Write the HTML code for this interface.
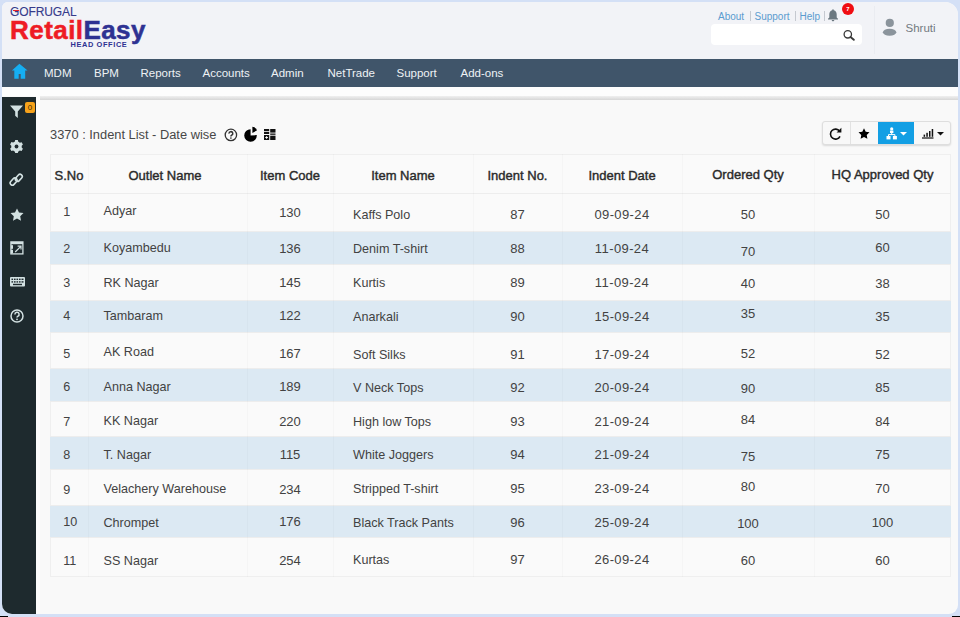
<!DOCTYPE html><html><head><meta charset="utf-8"><style>
*{margin:0;padding:0;box-sizing:border-box}
html,body{width:960px;height:617px;overflow:hidden;background:#d4e0f6;font-family:"Liberation Sans",sans-serif}
.frame{position:absolute;left:2px;top:2px;width:956px;height:612px;border-radius:6px 13px 9px 10px;overflow:hidden;background:#f9f9f9}
.a{position:absolute;white-space:nowrap}
.nv{font-size:11.5px;color:#eef2f5;line-height:14px}
.c{font-size:13px;color:#424242;line-height:16px}
.th{color:#2a2a2a;-webkit-text-stroke:0.4px #2a2a2a}
.tx{font-size:12.6px}
</style></head><body><div class="frame">
<div class="a" style="left:-2px;top:-2px;width:960px;height:59px;background:#f2f3f7"></div>
<div class="a" style="left:-2px;top:57px;width:960px;height:28px;background:#40556a"></div>
<div class="a" style="left:-2px;top:85px;width:960px;height:9px;background:#fdfdfd"></div>
<div class="a" style="left:34px;top:94px;width:4px;height:521px;background:#fdfdfd"></div>
<div class="a" style="left:38px;top:94px;width:920px;height:3.5px;background:linear-gradient(#f0f0f0,#d7d7d7)"></div>
<div class="a" style="left:0px;top:94.5px;width:34px;height:521px;background:#1e2a2e"></div>
<div class="a " style="left:8px;top:2.5999999999999996px;font-size:12px;color:#353a8a;line-height:14px;letter-spacing:-0.1px;-webkit-text-stroke:0.1px #353a8a">GOFRUGAL</div>
<div class="a" style="left:11.2px;top:7.9px;width:6.2px;height:1.4px;background:#e8202a"></div>
<div class="a " style="left:8px;top:12.5px;font-size:26px;font-weight:bold;line-height:30px;-webkit-text-stroke:0.5px currentColor"><span style="color:#ee1c25;letter-spacing:0.45px;-webkit-text-stroke:0.5px #ee1c25">Retail</span><span style="color:#2e3192;letter-spacing:0.4px;-webkit-text-stroke:0.5px #2e3192">Easy</span></div>
<div class="a " style="left:68.5px;top:38.5px;font-size:7.4px;font-weight:bold;color:#2e3192;line-height:8px;letter-spacing:0.62px">HEAD OFFICE</div>
<div class="a " style="left:716px;top:9px;font-size:10px;color:#5b9bcf;line-height:12px">About</div>
<div class="a " style="left:752.5px;top:9px;font-size:10px;color:#5b9bcf;line-height:12px">Support</div>
<div class="a " style="left:797.5px;top:9px;font-size:10px;color:#5b9bcf;line-height:12px">Help</div>
<div class="a" style="left:747.5px;top:8.5px;width:1px;height:10px;background:#c5c9d0"></div>
<div class="a" style="left:792.5px;top:8.5px;width:1px;height:10px;background:#c5c9d0"></div>
<div class="a" style="left:821.5px;top:8.5px;width:1px;height:10px;background:#c5c9d0"></div>
<svg class="a" style="left:825px;top:6px" width="12" height="14" viewBox="0 0 12 14"><path d="M6 1.2c-.5 0-.8.4-.8.8v.3C3.3 2.8 2.3 4.5 2.3 6.4v3L1 10.8v.6h10v-.6L9.7 9.4v-3c0-1.9-1-3.6-2.9-4.1V2c0-.4-.3-.8-.8-.8zM4.7 11.9c0 .8.6 1.4 1.3 1.4s1.3-.6 1.3-1.4z" fill="#6b7880"/></svg>
<div class="a" style="left:840px;top:1px;width:12px;height:12px;border-radius:6px;background:#f00d12;color:#fff;font-size:6px;font-weight:bold;line-height:12px;text-align:center">7</div>
<div class="a" style="left:709px;top:22px;width:151px;height:21px;background:#fff;border-radius:4px"></div>
<svg class="a" style="left:840px;top:27px" width="14" height="12" viewBox="0 0 14 12"><circle cx="5.8" cy="5.3" r="3.7" fill="none" stroke="#3a3a3a" stroke-width="1.3"/><path d="M8.5 8L11.8 10.8" stroke="#3a3a3a" stroke-width="1.9" stroke-linecap="round"/></svg>
<div class="a" style="left:872px;top:4px;width:1px;height:48px;background:#eaecf1"></div>
<svg class="a" style="left:878px;top:15px" width="20" height="21" viewBox="0 0 20 21"><circle cx="9.8" cy="5.9" r="4.1" fill="#8b949c"/><ellipse cx="9.6" cy="15.2" rx="6.7" ry="3.5" fill="#8b949c"/></svg>
<div class="a " style="left:903.5px;top:19.5px;font-size:11.5px;color:#737a80;line-height:13px">Shruti</div>
<svg class="a" style="left:9px;top:61px" width="18" height="17" viewBox="0 0 18 17"><path d="M8.4 0.8L0.9 7.6h2.4V15.8h4.4V11h2V15.8h4.5V7.6h2.4z" fill="#15aef2"/></svg>
<svg class="a" style="left:7px;top:102px" width="15" height="15" viewBox="0 0 15 15"><path d="M1 1.5h13L8.8 7.5V14L6.2 11.8V7.5z" fill="#d3e1e2"/></svg>
<div class="a" style="left:23px;top:99.6px;width:10px;height:11px;border-radius:2px;background:#f6a21b;color:#3a2a05;font-size:8px;line-height:11px;text-align:center">0</div>
<svg class="a" style="left:7px;top:137px" width="15" height="15" viewBox="-7.5 -7.5 15 15"><path d="M-1.3-6.4h2.6l.5 1.7 1.6.9 1.7-.5 1.3 2.3-1.2 1.3v1.6l1.2 1.3-1.3 2.3-1.7-.5-1.6.9-.5 1.7h-2.6l-.5-1.7-1.6-.9-1.7.5-1.3-2.3 1.2-1.3V-.8l-1.2-1.3 1.3-2.3 1.7.5 1.6-.9z" fill="#d3e1e2"/><circle r="1.9" fill="#1f2a2f"/></svg>
<svg class="a" style="left:7px;top:171px" width="15" height="14" viewBox="0 0 15 14"><g fill="none" stroke="#d3e1e2" stroke-width="1.6"><rect x="0.6" y="6.4" width="8" height="4.4" rx="2.2" transform="rotate(-48 4.6 8.6)"/><rect x="5.8" y="2.6" width="8" height="4.4" rx="2.2" transform="rotate(-48 9.8 4.8)"/></g></svg>
<svg class="a" style="left:7.5px;top:205.5px" width="14" height="13" viewBox="0 0 14 13"><path d="M7 .4l2 4.1 4.5.6-3.3 3.1.8 4.5L7 10.6 3 12.7l.8-4.5L.5 5.1 5 4.5z" fill="#d3e1e2"/></svg>
<svg class="a" style="left:8px;top:238.5px" width="14" height="14" viewBox="0 0 14 14"><rect x="0.9" y="0.9" width="12" height="12" fill="none" stroke="#d3e1e2" stroke-width="1.3"/><rect x="1" y="1" width="12" height="2.2" fill="#d3e1e2"/><rect x="1" y="4.2" width="2" height="3.6" fill="#d3e1e2"/><rect x="1" y="8.8" width="2" height="3.6" fill="#d3e1e2"/><path d="M5.2 11L10.6 5.6M7.6 5.2h3.4v3.4" fill="none" stroke="#d3e1e2" stroke-width="1.2"/></svg>
<svg class="a" style="left:7.5px;top:274.5px" width="15" height="10" viewBox="0 0 15 10"><rect x="0" y="0" width="15" height="9.6" rx="1" fill="#d3e1e2"/><g fill="#1f2a2f"><rect x="1.5" y="1.6" width="1.6" height="1.4"/><rect x="4" y="1.6" width="1.6" height="1.4"/><rect x="6.5" y="1.6" width="1.6" height="1.4"/><rect x="9" y="1.6" width="1.6" height="1.4"/><rect x="11.5" y="1.6" width="2" height="1.4"/><rect x="1.5" y="4.2" width="1.6" height="1.4"/><rect x="4" y="4.2" width="1.6" height="1.4"/><rect x="6.5" y="4.2" width="1.6" height="1.4"/><rect x="9" y="4.2" width="1.6" height="1.4"/><rect x="11.5" y="4.2" width="2" height="1.4"/><rect x="3" y="6.8" width="9" height="1.4"/></g></svg>
<svg class="a" style="left:7.5px;top:306.5px" width="14" height="14" viewBox="0 0 14 14"><circle cx="7" cy="7" r="6" fill="none" stroke="#d3e1e2" stroke-width="1.5"/><path d="M4.9 5.4a2.1 2.1 0 1 1 2.9 1.9c-.6.3-.8.6-.8 1.3" fill="none" stroke="#d3e1e2" stroke-width="1.5"/><circle cx="7" cy="10.3" r=".9" fill="#d3e1e2"/></svg>
<svg class="a" style="left:222px;top:125.5px" width="14" height="14" viewBox="0 0 14 14"><circle cx="6.9" cy="6.9" r="5.7" fill="none" stroke="#333" stroke-width="1.3"/><path d="M5 5.6a1.9 1.9 0 1 1 2.6 1.7c-.5.2-.7.5-.7 1.1" fill="none" stroke="#333" stroke-width="1.5"/><circle cx="6.9" cy="10" r=".85" fill="#333"/></svg>
<svg class="a" style="left:241.5px;top:124px" width="15" height="16" viewBox="0 0 15 16"><path d="M6.6 3.2A6.3 6.3 0 1 0 12.8 9.1L6.6 9.4z" fill="#000"/><path d="M8.4 0.8A5.6 5.6 0 0 1 13.1 4.2L8.4 7.1z" fill="#000"/></svg>
<svg class="a" style="left:262px;top:127px" width="12" height="11" viewBox="0 0 12 11"><g fill="#111"><rect x="0" y="0" width="5.2" height="2.2"/><rect x="0" y="3" width="5.2" height="2"/><rect x="0" y="6" width="5.2" height="5"/><rect x="6.2" y="0" width="5.3" height="3.6"/><rect x="6.2" y="4.5" width="5.3" height="1.3"/><rect x="6.2" y="6.7" width="5.3" height="4.3"/></g><path d="M1.2 8.5h2.8M2.6 7.1v2.8" stroke="#fff" stroke-width="0.9"/></svg>
<div class="a nv" style="left:42px;top:64px;">MDM</div>
<div class="a nv" style="left:92px;top:64px;">BPM</div>
<div class="a nv" style="left:138.5px;top:64px;">Reports</div>
<div class="a nv" style="left:200.5px;top:64px;">Accounts</div>
<div class="a nv" style="left:269px;top:64px;">Admin</div>
<div class="a nv" style="left:325.5px;top:64px;">NetTrade</div>
<div class="a nv" style="left:394.5px;top:64px;">Support</div>
<div class="a nv" style="left:458.5px;top:64px;">Add-ons</div>
<div class="a " style="left:48px;top:125px;font-size:12.85px;color:#474747;line-height:15px">3370 : Indent List - Date wise</div>
<div class="a" style="left:820px;top:119px;width:129px;height:24px;background:#f8f8f8;border:1px solid #dedede;border-radius:3px;box-shadow:0 1px 2px rgba(0,0,0,.13)"></div>
<div class="a" style="left:875.5px;top:119.5px;width:36px;height:22px;background:#139fe4"></div>
<div class="a" style="left:847.5px;top:120px;width:1px;height:22px;background:#e2e2e2"></div>
<svg class="a" style="left:827px;top:125px" width="14" height="13" viewBox="0 0 14 13"><path d="M10.6 4.2A5 5 0 1 0 11 9.3" fill="none" stroke="#111" stroke-width="1.6"/><path d="M12.4 0.8V5.6H7.6z" fill="#111"/></svg>
<svg class="a" style="left:855.5px;top:125.8px" width="12" height="11" viewBox="0 0 14 13"><path d="M7 .4l2 4.1 4.5.6-3.3 3.1.8 4.5L7 10.6 3 12.7l.8-4.5L.5 5.1 5 4.5z" fill="#000"/></svg>
<svg class="a" style="left:883.5px;top:125px" width="12" height="13" viewBox="0 0 12 13"><g fill="#fff"><circle cx="5.7" cy="1.9" r="1.6"/><rect x="4" y="3.6" width="3.4" height="2.4"/><rect x="0.5" y="9" width="4" height="3.4"/><rect x="6.9" y="9" width="4" height="3.4"/></g><path d="M5.7 6v1.6M2.5 9V7.6h6.4V9" fill="none" stroke="#fff" stroke-width="1"/></svg>
<svg class="a" style="left:898px;top:129.5px" width="7" height="4" viewBox="0 0 7 4"><path d="M0 0h7L3.5 3.6z" fill="#fff"/></svg>
<svg class="a" style="left:920px;top:127px" width="12" height="10" viewBox="0 0 12 10"><g fill="#111"><rect x="0" y="8.4" width="11.5" height="1.2"/><rect x="1.6" y="5.6" width="1.5" height="2.2"/><rect x="4.3" y="3.8" width="1.5" height="4"/><rect x="7" y="2" width="1.5" height="5.8"/><rect x="9.7" y="0" width="1.5" height="7.8"/></g></svg>
<svg class="a" style="left:934.5px;top:129.5px" width="7" height="4" viewBox="0 0 7 4"><path d="M0 0h7L3.5 3.6z" fill="#111"/></svg>
<div class="a" style="left:48px;top:152px;width:901px;height:423px;background:#fafafa;border:1px solid #efefef"></div>
<div class="a" style="left:48px;top:191px;width:901px;height:1px;background:#ededed"></div>
<div class="a" style="left:48px;top:229px;width:901px;height:33px;background:#dce9f3"></div>
<div class="a" style="left:48px;top:229px;width:901px;height:1px;background:#ededed"></div>
<div class="a" style="left:48px;top:262px;width:901px;height:1px;background:#ededed"></div>
<div class="a" style="left:48px;top:298px;width:901px;height:32px;background:#dce9f3"></div>
<div class="a" style="left:48px;top:298px;width:901px;height:1px;background:#ededed"></div>
<div class="a" style="left:48px;top:330px;width:901px;height:1px;background:#ededed"></div>
<div class="a" style="left:48px;top:366px;width:901px;height:33px;background:#dce9f3"></div>
<div class="a" style="left:48px;top:366px;width:901px;height:1px;background:#ededed"></div>
<div class="a" style="left:48px;top:399px;width:901px;height:1px;background:#ededed"></div>
<div class="a" style="left:48px;top:434px;width:901px;height:33px;background:#dce9f3"></div>
<div class="a" style="left:48px;top:434px;width:901px;height:1px;background:#ededed"></div>
<div class="a" style="left:48px;top:467px;width:901px;height:1px;background:#ededed"></div>
<div class="a" style="left:48px;top:503px;width:901px;height:32px;background:#dce9f3"></div>
<div class="a" style="left:48px;top:503px;width:901px;height:1px;background:#ededed"></div>
<div class="a" style="left:48px;top:535px;width:901px;height:1px;background:#ededed"></div>
<div class="a" style="left:86px;top:152px;width:1px;height:423px;background:rgba(0,0,0,0.018)"></div>
<div class="a" style="left:245px;top:152px;width:1px;height:423px;background:rgba(0,0,0,0.018)"></div>
<div class="a" style="left:331px;top:152px;width:1px;height:423px;background:rgba(0,0,0,0.018)"></div>
<div class="a" style="left:471px;top:152px;width:1px;height:423px;background:rgba(0,0,0,0.018)"></div>
<div class="a" style="left:560px;top:152px;width:1px;height:423px;background:rgba(0,0,0,0.018)"></div>
<div class="a" style="left:680px;top:152px;width:1px;height:423px;background:rgba(0,0,0,0.018)"></div>
<div class="a" style="left:812px;top:152px;width:1px;height:423px;background:rgba(0,0,0,0.018)"></div>
<div class="a c th" style="left:48px;top:166.0px;width:38px;text-align:center">S.No</div>
<div class="a c th" style="left:83.5px;top:166.0px;width:159px;text-align:center">Outlet Name</div>
<div class="a c th" style="left:245px;top:166.0px;width:86px;text-align:center">Item Code</div>
<div class="a c th" style="left:331px;top:166.0px;width:140px;text-align:center">Item Name</div>
<div class="a c th" style="left:471px;top:166.0px;width:89px;text-align:center">Indent No.</div>
<div class="a c th" style="left:560px;top:166.0px;width:120px;text-align:center">Indent Date</div>
<div class="a c th" style="left:680px;top:165.0px;width:132px;text-align:center">Ordered Qty</div>
<div class="a c th" style="left:812px;top:165.0px;width:137px;text-align:center">HQ Approved Qty</div>
<div class="a c tx" style="left:61.3px;top:201.7px">1</div>
<div class="a c tx" style="left:101.5px;top:200.8px">Adyar</div>
<div class="a c" style="left:245px;top:202.5px;width:86px;text-align:center;">130</div>
<div class="a c tx" style="left:351px;top:204.8px">Kaffs Polo</div>
<div class="a c" style="left:471px;top:204.8px;width:89px;text-align:center;">87</div>
<div class="a c" style="left:560px;top:204.8px;width:120px;text-align:center;letter-spacing:0.4px;">09-09-24</div>
<div class="a c" style="left:680px;top:205.0px;width:132px;text-align:center;">50</div>
<div class="a c" style="left:812px;top:205.0px;width:137px;text-align:center;">50</div>
<div class="a c tx" style="left:61.3px;top:238.5px">2</div>
<div class="a c tx" style="left:101.5px;top:238.2px">Koyambedu</div>
<div class="a c" style="left:245px;top:238.5px;width:86px;text-align:center;">136</div>
<div class="a c tx" style="left:351px;top:238.5px">Denim T-shirt</div>
<div class="a c" style="left:471px;top:238.5px;width:89px;text-align:center;">88</div>
<div class="a c" style="left:560px;top:238.5px;width:120px;text-align:center;letter-spacing:0.4px;">11-09-24</div>
<div class="a c" style="left:680px;top:241.5px;width:132px;text-align:center;">70</div>
<div class="a c" style="left:812px;top:238.4px;width:137px;text-align:center;">60</div>
<div class="a c tx" style="left:61.3px;top:273.1px">3</div>
<div class="a c tx" style="left:101.5px;top:273.1px">RK Nagar</div>
<div class="a c" style="left:245px;top:273.1px;width:86px;text-align:center;">145</div>
<div class="a c tx" style="left:351px;top:272.9px">Kurtis</div>
<div class="a c" style="left:471px;top:272.9px;width:89px;text-align:center;">89</div>
<div class="a c" style="left:560px;top:272.9px;width:120px;text-align:center;letter-spacing:0.4px;">11-09-24</div>
<div class="a c" style="left:680px;top:273.5px;width:132px;text-align:center;">40</div>
<div class="a c" style="left:812px;top:273.5px;width:137px;text-align:center;">38</div>
<div class="a c tx" style="left:61.3px;top:306.3px">4</div>
<div class="a c tx" style="left:101.5px;top:306.0px">Tambaram</div>
<div class="a c" style="left:245px;top:306.3px;width:86px;text-align:center;">122</div>
<div class="a c tx" style="left:351px;top:306.5px">Anarkali</div>
<div class="a c" style="left:471px;top:306.5px;width:89px;text-align:center;">90</div>
<div class="a c" style="left:560px;top:306.5px;width:120px;text-align:center;letter-spacing:0.4px;">15-09-24</div>
<div class="a c" style="left:680px;top:303.5px;width:132px;text-align:center;">35</div>
<div class="a c" style="left:812px;top:306.7px;width:137px;text-align:center;">35</div>
<div class="a c tx" style="left:61.3px;top:344.3px">5</div>
<div class="a c tx" style="left:101.5px;top:342.2px">AK Road</div>
<div class="a c" style="left:245px;top:344.3px;width:86px;text-align:center;">167</div>
<div class="a c tx" style="left:351px;top:344.5px">Soft Silks</div>
<div class="a c" style="left:471px;top:344.5px;width:89px;text-align:center;">91</div>
<div class="a c" style="left:560px;top:344.5px;width:120px;text-align:center;letter-spacing:0.4px;">17-09-24</div>
<div class="a c" style="left:680px;top:343.9px;width:132px;text-align:center;">52</div>
<div class="a c" style="left:812px;top:344.7px;width:137px;text-align:center;">52</div>
<div class="a c tx" style="left:61.3px;top:377.2px">6</div>
<div class="a c tx" style="left:101.5px;top:377.2px">Anna Nagar</div>
<div class="a c" style="left:245px;top:377.2px;width:86px;text-align:center;">189</div>
<div class="a c tx" style="left:351px;top:377.8px">V Neck Tops</div>
<div class="a c" style="left:471px;top:377.8px;width:89px;text-align:center;">92</div>
<div class="a c" style="left:560px;top:377.8px;width:120px;text-align:center;letter-spacing:0.4px;">20-09-24</div>
<div class="a c" style="left:680px;top:379.1px;width:132px;text-align:center;">90</div>
<div class="a c" style="left:812px;top:377.7px;width:137px;text-align:center;">85</div>
<div class="a c tx" style="left:61.3px;top:411.5px">7</div>
<div class="a c tx" style="left:101.5px;top:411.0px">KK Nagar</div>
<div class="a c" style="left:245px;top:411.5px;width:86px;text-align:center;">220</div>
<div class="a c tx" style="left:351px;top:411.8px">High low Tops</div>
<div class="a c" style="left:471px;top:411.8px;width:89px;text-align:center;">93</div>
<div class="a c" style="left:560px;top:411.8px;width:120px;text-align:center;letter-spacing:0.4px;">21-09-24</div>
<div class="a c" style="left:680px;top:410.2px;width:132px;text-align:center;">84</div>
<div class="a c" style="left:812px;top:412.3px;width:137px;text-align:center;">84</div>
<div class="a c tx" style="left:61.3px;top:445.0px">8</div>
<div class="a c tx" style="left:101.5px;top:445.0px">T. Nagar</div>
<div class="a c" style="left:245px;top:445.0px;width:86px;text-align:center;">115</div>
<div class="a c tx" style="left:351px;top:445.3px">White Joggers</div>
<div class="a c" style="left:471px;top:445.3px;width:89px;text-align:center;">94</div>
<div class="a c" style="left:560px;top:445.3px;width:120px;text-align:center;letter-spacing:0.4px;">21-09-24</div>
<div class="a c" style="left:680px;top:446.5px;width:132px;text-align:center;">75</div>
<div class="a c" style="left:812px;top:445.0px;width:137px;text-align:center;">75</div>
<div class="a c tx" style="left:61.3px;top:479.5px">9</div>
<div class="a c tx" style="left:101.5px;top:479.2px">Velachery Warehouse</div>
<div class="a c" style="left:245px;top:479.5px;width:86px;text-align:center;">234</div>
<div class="a c tx" style="left:351px;top:479.0px">Stripped T-shirt</div>
<div class="a c" style="left:471px;top:479.0px;width:89px;text-align:center;">95</div>
<div class="a c" style="left:560px;top:479.0px;width:120px;text-align:center;letter-spacing:0.4px;">23-09-24</div>
<div class="a c" style="left:680px;top:477.4px;width:132px;text-align:center;">80</div>
<div class="a c" style="left:812px;top:479.4px;width:137px;text-align:center;">70</div>
<div class="a c tx" style="left:61.3px;top:512.4px">10</div>
<div class="a c tx" style="left:101.5px;top:512.5px">Chrompet</div>
<div class="a c" style="left:245px;top:511.5px;width:86px;text-align:center;">176</div>
<div class="a c tx" style="left:351px;top:512.7px">Black Track Pants</div>
<div class="a c" style="left:471px;top:512.7px;width:89px;text-align:center;">96</div>
<div class="a c" style="left:560px;top:512.7px;width:120px;text-align:center;letter-spacing:0.4px;">25-09-24</div>
<div class="a c" style="left:680px;top:513.8px;width:132px;text-align:center;">100</div>
<div class="a c" style="left:812px;top:512.5px;width:137px;text-align:center;">100</div>
<div class="a c tx" style="left:61.3px;top:550.6px">11</div>
<div class="a c tx" style="left:101.5px;top:550.5px">SS Nagar</div>
<div class="a c" style="left:245px;top:550.5px;width:86px;text-align:center;">254</div>
<div class="a c tx" style="left:351px;top:549.8px">Kurtas</div>
<div class="a c" style="left:471px;top:549.8px;width:89px;text-align:center;">97</div>
<div class="a c" style="left:560px;top:549.8px;width:120px;text-align:center;letter-spacing:0.4px;">26-09-24</div>
<div class="a c" style="left:680px;top:551.0px;width:132px;text-align:center;">60</div>
<div class="a c" style="left:812px;top:551.0px;width:137px;text-align:center;">60</div>
</div><div style="position:absolute;left:0;top:616px;width:8px;height:1px;background:#000"></div><div style="position:absolute;left:952px;top:616px;width:8px;height:1px;background:#000"></div></body></html>
